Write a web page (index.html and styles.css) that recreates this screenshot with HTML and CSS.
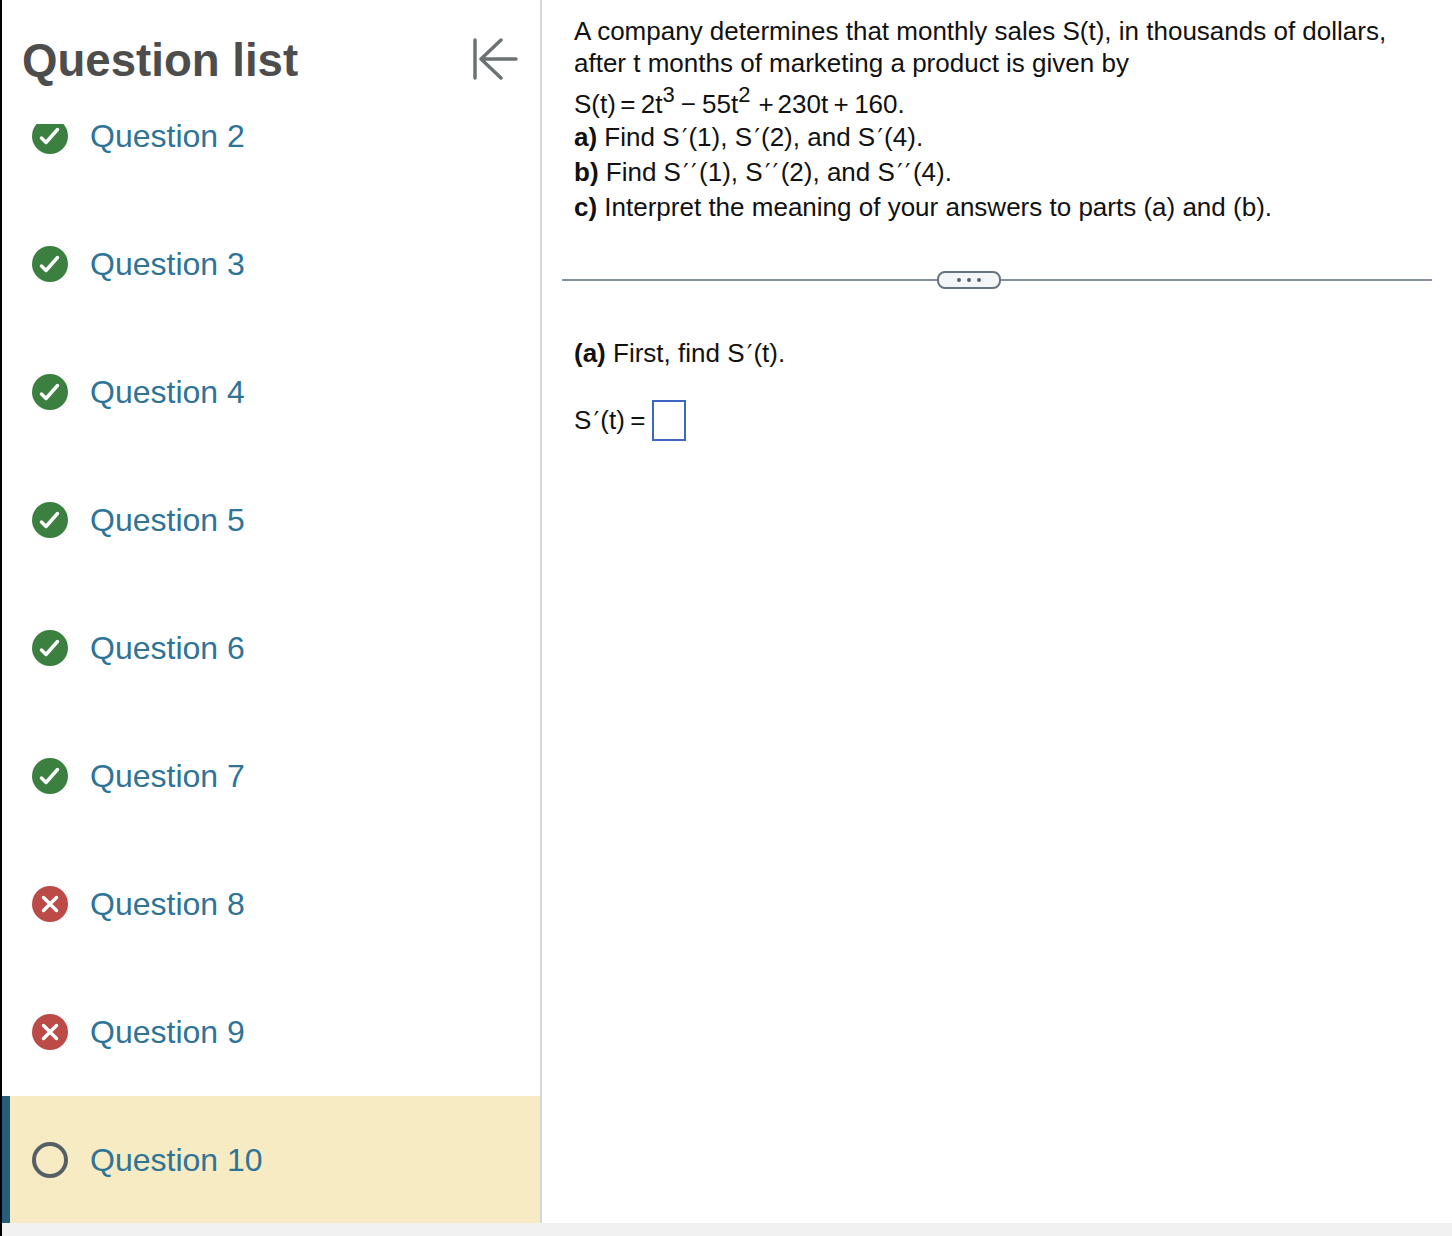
FILE: index.html
```html
<!DOCTYPE html>
<html lang="en">
<head>
  <meta charset="UTF-8" />
  <title>Question list</title>
  <link rel="stylesheet" href="styles.css">
</head>
<body>
  <div class="page">
    <!-- Sidebar -->
    <aside class="sidebar">
      <div class="sidebar-head">
        <h2>Question list</h2>
        <svg class="collapse" width="46" height="42" viewBox="0 0 46 42">
          <path d="M3 2V40" />
          <path d="M44 21H9M29 2L9 21L29 40" />
        </svg>
      </div>
      <div class="list-window">
        <ul class="question-list">
          <li><svg class="status" viewBox="0 0 36 36"><circle class="ok" cx="18" cy="18" r="18" /><path class="mark" d="M9.5 20L14 24.5L25.5 11.5" /></svg><a href="#">Question 2</a></li>
          <li><svg class="status" viewBox="0 0 36 36"><circle class="ok" cx="18" cy="18" r="18" /><path class="mark" d="M9.5 20L14 24.5L25.5 11.5" /></svg><a href="#">Question 3</a></li>
          <li><svg class="status" viewBox="0 0 36 36"><circle class="ok" cx="18" cy="18" r="18" /><path class="mark" d="M9.5 20L14 24.5L25.5 11.5" /></svg><a href="#">Question 4</a></li>
          <li><svg class="status" viewBox="0 0 36 36"><circle class="ok" cx="18" cy="18" r="18" /><path class="mark" d="M9.5 20L14 24.5L25.5 11.5" /></svg><a href="#">Question 5</a></li>
          <li><svg class="status" viewBox="0 0 36 36"><circle class="ok" cx="18" cy="18" r="18" /><path class="mark" d="M9.5 20L14 24.5L25.5 11.5" /></svg><a href="#">Question 6</a></li>
          <li><svg class="status" viewBox="0 0 36 36"><circle class="ok" cx="18" cy="18" r="18" /><path class="mark" d="M9.5 20L14 24.5L25.5 11.5" /></svg><a href="#">Question 7</a></li>
          <li><svg class="status" viewBox="0 0 36 36"><circle class="bad" cx="18" cy="18" r="18" /><path class="mark" d="M11.5 11.5L24.5 24.5M24.5 11.5L11.5 24.5" /></svg><a href="#">Question 8</a></li>
          <li><svg class="status" viewBox="0 0 36 36"><circle class="bad" cx="18" cy="18" r="18" /><path class="mark" d="M11.5 11.5L24.5 24.5M24.5 11.5L11.5 24.5" /></svg><a href="#">Question 9</a></li>
          <li class="current"><svg class="status" viewBox="0 0 36 36"><circle class="todo" cx="18" cy="18" r="16" /></svg><a href="#">Question 10</a></li>
        </ul>
      </div>
    </aside>

    <!-- Question -->
    <main class="content">
      <div class="prompt">
        <p class="line">A company determines that monthly sales S(t), in thousands of dollars,</p>
        <p class="line">after t months of marketing a product is given by</p>
        <p class="line formula">S(t)<span class="op eq">=</span>2t<sup>3</sup><span class="minus">&minus;</span>55t<sup>2</sup><span class="plus">+</span>230t<span class="op">+</span>160.</p>
        <p class="line part"><b>a)</b> Find S<span class="prime">&prime;</span>(1), S<span class="prime">&prime;</span>(2), and S<span class="prime">&prime;</span>(4).</p>
        <p class="line part"><b>b)</b> Find S<span class="prime double">&prime;&prime;</span>(1), S<span class="prime double">&prime;&prime;</span>(2), and S<span class="prime double">&prime;&prime;</span>(4).</p>
        <p class="line part"><b>c)</b> Interpret the meaning of your answers to parts (a) and (b).</p>
      </div>

      <div class="divider">
        <span class="rule rule-left"></span>
        <span class="pill"><i></i><i></i><i></i></span>
        <span class="rule"></span>
      </div>

      <div class="answer">
        <p class="line"><b>(a)</b> First, find S<span class="prime">&prime;</span>(t).</p>
        <div class="answer-row">
          <span>S<span class="prime">&prime;</span>(t)<span class="op">=</span></span>
          <span class="answer-box"></span>
        </div>
      </div>
    </main>
  </div>
  <div class="bottom-strip"></div>
</body>
</html>
```

FILE: styles.css
```css
/* ---- Global ---- */
html, body {
  margin: 0;
  padding: 0;
  background: #fff;
}
body {
  height: 1236px;
  overflow: hidden;
  border-left: 2px solid #000;
  box-sizing: border-box;
  font-family: "Liberation Sans", Arial, sans-serif;
  color: #111;
}
p { margin: 0; }

.page {
  display: flex;
  height: 1223px;
}
.bottom-strip {
  height: 13px;
  background: #f1f1f1;
}

/* ---- Sidebar ---- */
.sidebar {
  width: 538px;
  border-right: 2px solid #d2d6e2;
  display: flex;
  flex-direction: column;
  flex-shrink: 0;
}
.sidebar-head {
  height: 124px;
  padding: 0 22px 2px 20px;
  box-sizing: border-box;
  display: flex;
  justify-content: space-between;
  align-items: center;
}
.sidebar-head h2 {
  margin: 0;
  font-size: 45.6px;
  font-weight: 700;
  color: #4d4d4d;
}
.collapse {
  fill: none;
  stroke: #6c7274;
  stroke-width: 3.5;
  stroke-linecap: round;
  stroke-linejoin: round;
  margin-top: -4px;
}
.list-window {
  flex: 1;
  overflow: hidden;
}
.question-list {
  list-style: none;
  margin: -52px 0 0;
  padding: 0;
}
.question-list li {
  height: 128px;
  padding-left: 30px;
  display: flex;
  align-items: center;
  gap: 22px;
  box-sizing: border-box;
}
.question-list li.current {
  background: #f7ebc4;
  border-left: 8px solid #265d78;
  padding-left: 22px;
}
.question-list a {
  font-size: 32px;
  color: #2f7496;
  text-decoration: none;
}
.status {
  width: 36px;
  height: 36px;
  flex-shrink: 0;
}
.ok { fill: #3b8041; }
.bad { fill: #bc4b47; }
.todo {
  fill: none;
  stroke: #565e66;
  stroke-width: 4;
}
.mark {
  fill: none;
  stroke: #fff;
  stroke-width: 3.4;
  stroke-linecap: round;
  stroke-linejoin: round;
}

/* ---- Question ---- */
.content {
  flex: 1;
  padding: 0 20px;
  font-size: 26px;
}
.prompt {
  padding: 15px 12px 0;
}
.line {
  line-height: 32px;
}
.formula {
  padding-top: 9px;
  line-height: 32px;
}
.part {
  line-height: 35px;
}
.formula sup {
  font-size: 22px;
  line-height: 0;
  vertical-align: 11px;
}
.op { margin: 0 5.4px; }
.op.eq { margin-right: 5.4px; margin-left: 4.4px; }
.plus { margin: 0 4px 0 8px; }
.minus { margin: 0 6px 0 6px; }
.prime {
  font-family: "DejaVu Sans", sans-serif;
  font-size: 24px;
  line-height: 0;
  margin-left: 2.4px;
  letter-spacing: 1.1px;
}
.prime.double {
  letter-spacing: 2.4px;
}

.divider {
  display: flex;
  align-items: center;
  margin-top: 46px;
}
.rule {
  flex: 1;
  height: 2px;
  background: #858f9d;
}
.rule-left {
  flex: none;
  width: 375px;
}
.pill {
  width: 64px;
  height: 18px;
  box-sizing: border-box;
  border: 2px solid #68737f;
  border-radius: 8px;
  background: #f4f5f7;
  display: flex;
  justify-content: center;
  align-items: center;
  gap: 6px;
}
.pill i {
  width: 4px;
  height: 4px;
  border-radius: 50%;
  background: #5a626c;
}

.answer {
  padding: 48px 12px 0;
}
.answer-row {
  display: flex;
  align-items: center;
  margin-top: 31px;
}
.answer-row .op { margin-right: 7px; }
.answer-box {
  width: 34px;
  height: 41px;
  box-sizing: border-box;
  border: 2px solid #3f66c2;
  background: #fff;
}
```
